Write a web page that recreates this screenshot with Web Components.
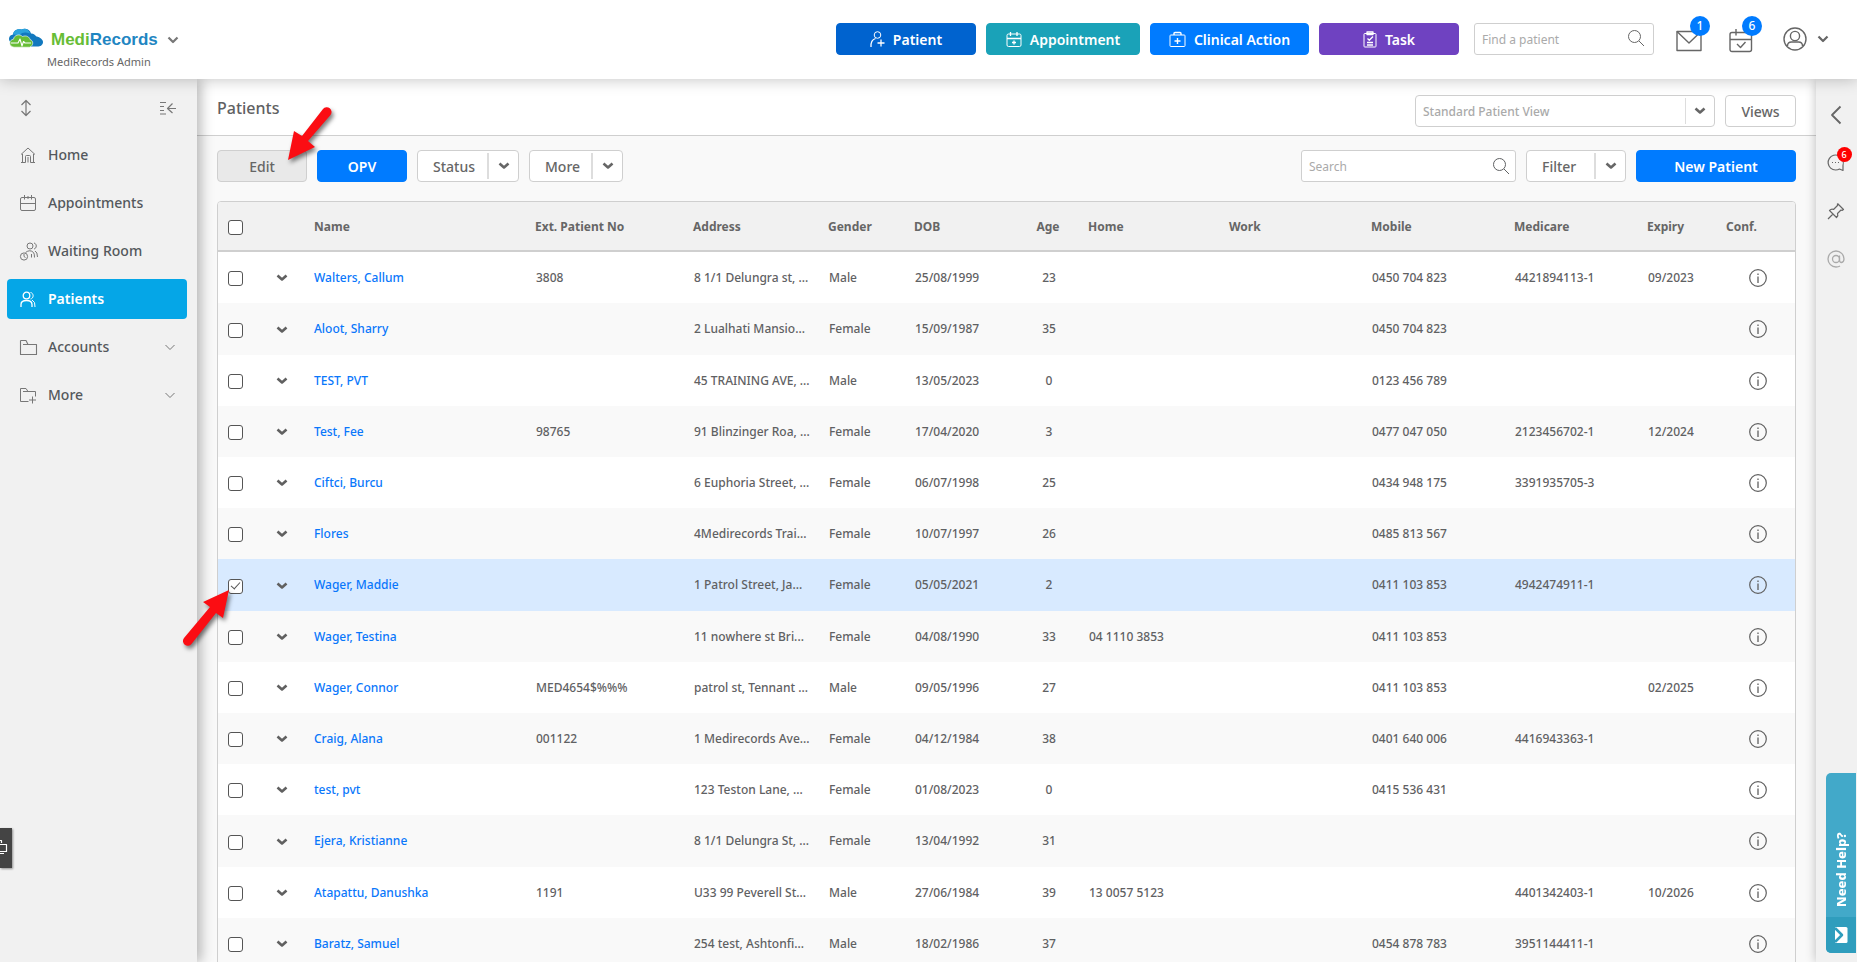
<!DOCTYPE html>
<html lang="en">
<head>
<meta charset="utf-8">
<title>MediRecords - Patients</title>
<style>
  html, body { margin: 0; height: 100%; }
  body {
    font-family: "Noto Sans", "Open Sans", sans-serif;
    font-size: 14px; color: #5f6163; background: #f9f9f9;
    --line: #cfcfcf; --ink: #666; --blue: #007bff; --panel: #f1f1f1;
  }
</style>
</head>
<body>
<mr-app></mr-app>
<script>
const ICONS = {
  chev: [12, 8, '<path d="M1.500 1.500 6 5.500l4.500-4" stroke-width="2.600"/>'],
  chevthin: [10, 7, '<path d="M.5 1 5 5.500 9.500 1"/>'],
  chevlogo: [12, 8, '<path d="M1.500 1.500 6 6l4.500-4.500" stroke-width="2.200"/>'],
  updown: [12, 18, '<path d="M6 2v14M1.500 6 6 1.500 10.500 6M1.500 12 6 16.500l4.500-4.500" stroke-width="1.200"/>'],
  collapse: [18, 14, '<path d="M1 1.500h6M1 5.500h4M1 9.500h4M1 13h6M9 7.500h8M13.500 2.500 8.500 7.500l5 4.500" stroke-width="1.200"/>'],
  home: [16, 16, '<path d="M1 7.500 8 1l7 6.500M2.500 7v8.500M13.500 7v8.500M1 15.500h4.500V9.500q0-1 1-1h3q1 0 1 1v6H15M8 10v5.500"/>'],
  cal: [16, 16, '<rect x=".5" y="2.500" width="15" height="13" rx="1.500"/><path d="M.5 8.500h15M4.500 0v4.500M11.500 0v4.500M8 1v3"/>'],
  wait: [18, 19, '<circle cx="10" cy="4" r="3"/><path d="M14 1c3 .5 3 5.500 0 6M5.500 10.500q4.500-3.500 8 0 1 1 1 5M15 9q2.500 1 2.500 6M11.500 12v3.500"/><circle cx="4" cy="14.500" r="3.600"/><path d="M4 12v2.500l1.500 1"/>'],
  people: [16, 17, '<circle cx="6.500" cy="4.500" r="3.300" stroke-width="1.300"/><path d="M1 16v-2.500Q1 9.500 6.500 9.500t5.500 4V16" stroke-width="1.300"/><path d="M10.500 1.500c3.500.5 3.500 6 0 6.500M12 9q3.500 1.500 3 7"/>'],
  folder: [17, 16, '<path d="M.5 1.500V15.500h16V5.500H3M.5 1.500H6L8 5.500" stroke-width="1.100"/>'],
  folderplus: [17, 17, '<path d="M8.500 14.500H.5v-13H6l2 3h7.500v5M3 4.500h5M12.500 9.500v7M9 13h7"/>'],
  useradd: [15, 17, '<circle cx="7.500" cy="4" r="3.300"/><path d="M1 16q-.5-7 4.500-8.500M7.500 12h7M11 8.500v7" stroke-width="1.300"/>'],
  calplus: [16, 17, '<rect x="1" y="3" width="14" height="12.500" rx="1.500"/><path d="M1 7.500h14M4.500 1v4M11 1v4M8 9.500v4M6 11.500h4" stroke-width="1.300"/>'],
  kit: [17, 17, '<rect x="1" y="4" width="15" height="11.500" rx=".8"/><path d="M5 4V2.500Q5 1.500 6 1.500h5q1 0 1 1V4M8.500 7v6M5.500 10h6" stroke-width="1.400"/>'],
  task: [14, 17, '<rect x="1" y="2.500" width="12" height="13.500" rx=".8"/><path d="M4 1h6v2.500H4zM4 11.500h6M4 14h6M4.500 7.500l1.800 1.800L10 5.500" stroke-width="1.300"/>'],
  search: [18, 18, '<circle cx="7.500" cy="7.500" r="6"/><path d="m12 12 5 5"/>'],
  mail: [26, 22, '<path d="M1 1.500h24v19H1z" stroke-width="1.400"/><path d="M1 1.500 13 13 25 1.500" stroke-width="1.400"/>'],
  calcheck: [24, 24, '<rect x="1" y="3.500" width="21.500" height="19" rx="2" stroke-width="1.400"/><path d="M1 10.500h21.500M7 0v6.500M8 15l3.500 3.500 5-5.500" stroke-width="1.400"/>'],
  user: [24, 24, '<circle cx="12" cy="12" r="11" stroke-width="1.400"/><circle cx="12" cy="9" r="4.600" stroke-width="1.400"/><path d="M4.500 19q0-4 4-4h7q4 0 4 4" stroke-width="1.400"/>'],
  back: [12, 20, '<path d="M10.500 1.500 2 10l8.500 8.500" stroke-width="1.800"/>'],
  chat: [18, 18, '<path d="M16 16.500v-5q1-3-.5-6A7.500 7.500 0 1 0 8.500 16q2.500 0 4-1zM5 8.500h1M8 8.500h1M11 8.500h1" stroke-width="1.200"/>'],
  pin: [18, 18, '<path d="m10.500 1.500 6 6-1.500 1-1-.5-3.500 3.500q1 2-1 4L2.500 8.500q2-2 4-1L10.500 3.500V1.500M6 12l-5 5" stroke-width="1.200"/>'],
  at: [18, 18, '<circle cx="9" cy="9" r="3.500" stroke-width="1.300"/><path d="M12.500 5.500V10q0 2.500 2 2.500 2.500-.5 2.500-3.500A8 8 0 1 0 9 17q2.500 0 4-1" stroke-width="1.300"/>'],
  info: [18, 18, '<circle cx="9" cy="9" r="8.300" stroke-width="1.200"/><path d="M9 7.500V14M9 4.500V6" stroke-width="1.300"/>'],
  mailsolid: [14, 16, '<path d="M1 0h11q1.500 0 1.500 1.500v13Q13.500 16 12 16H1z" fill="#fff" stroke="none"/><path d="m1 1 7 7-7 7" stroke="#2f9dbd" stroke-width="2.500"/>'],
  screen: [8, 16, '<path d="M-4 4.500H6.500v7H-4M-1 4V.5h2.500V3M0 13.500h4" stroke-width="1.200"/>'],
  cloud: [36, 20, '<path d="M3 14.500C-.5 12 1 7 5 6.500 5.500 2 10 .5 13.500 1.500 17-.5 22 1 23 5.500c3 0 4 1.500 5.500 3C32 9 35.500 12 35 14.500S33 18.500 29 18.500H18L8 14z" fill="#1278be" stroke="none"/><path d="M5 6.500C5.500 2 10 .5 13.500 1.500 17-.5 21 1.500 22 5.500 18 4 14 4 12 7z" fill="#2ba3dc" stroke="none"/><path d="M6 19.200c-6-1-5-7.500-.5-8C6 7 11.500 5.500 14.500 8.500c4-1.500 7 .5 7.500 3 3.500 1 4 6-.5 7.700z" fill="#67bd36" stroke="#fff" stroke-width=".6"/><path d="M3 15h7l2-4 2 7 1.500-4.500L17 15h6" stroke="#fff" stroke-width="1.100"/>']
};

/* Registers an element whose shadow root is filled from css + html. */
function define(name, css, html) {
  const base = '*{box-sizing:border-box}button,input,select{font-family:inherit;font-size:14px;line-height:20px;color:inherit;margin:0}button{border:0;background:none;padding:0;cursor:pointer}';
  customElements.define(name, class extends HTMLElement {
    constructor() {
      super();
      this.attachShadow({ mode: 'open' });
    }
    connectedCallback() {
      if (this.shadowRoot.firstChild) return;
      const markup = typeof html === 'function' ? html(this) : html;
      this.shadowRoot.innerHTML = `<style>${base}${css}</style>${markup}`;
    }
  });
}

define('mr-icon', ':host{display:inline-flex;flex:none}svg{display:block;overflow:visible;fill:none;stroke:currentColor;stroke-width:1;stroke-linejoin:round}', el => {
  const [w, h, body] = ICONS[el.getAttribute('name')];
  return `<svg width="${w}" height="${h}" viewBox="0 0 ${w} ${h}" aria-hidden="true">${body}</svg>`;
});

/* Solid or outlined push button */
define('mr-button', `
  :host{display:block}
  button{display:flex;align-items:center;justify-content:center;gap:8px;width:100%;height:32px;border-radius:4px;padding:1px 15px 0;background:var(--bg,#fff);border:1px solid var(--edge,var(--bg,var(--line)));color:var(--fg,var(--ink));font-weight:var(--weight,500);white-space:nowrap}
`, '<button type="button"><slot></slot></button>');

/* Label plus drop-down arrow */
define('mr-split', `
  :host{display:block}
  div{display:flex;height:32px;border:1px solid var(--line);border-radius:4px;background:#fff}
  button{color:var(--ink);font-weight:500}
  .l{flex:1;padding:1px 0 0 15px;text-align:left}
  .d{width:31px;display:flex;align-items:center;justify-content:center;border-left:2px solid #ddd;margin:2px 0}
`, () => `<div><button type="button" class="l"><slot></slot></button><button type="button" class="d" aria-label="Open menu"><mr-icon name="chev"></mr-icon></button></div>`);

define('mr-search', `
  :host{display:block}
  label{display:flex;align-items:center;height:32px;border:1px solid var(--line);border-radius:3px;background:#fff;padding:0 5px 0 7px}
  input{flex:1;min-width:0;border:0;outline:0;background:none;font-size:12px;padding:2px 0 0}
  input::placeholder{color:#aaa;opacity:1}
  :host([raised]) mr-icon{margin:0 3px 2px 0}
`, el => `<label><input type="text" aria-label="${el.getAttribute('hint')}" placeholder="${el.getAttribute('hint')}"><mr-icon name="search"></mr-icon></label>`);

define('mr-counter', `
  :host{display:block;position:relative}
  button{display:flex}
  span{position:absolute;left:var(--bx);top:var(--by);width:var(--size,20px);height:var(--size,20px);border-radius:50%;background:var(--badge,var(--blue));color:#fff;font-size:var(--fs,12px);line-height:var(--size,20px);font-weight:500;text-align:center}
`, el => `<button type="button" aria-label="${el.getAttribute('label')}"><mr-icon name="${el.getAttribute('icon')}"></mr-icon></button><span>${el.getAttribute('count')}</span>`);

define('mr-header', `
  :host{display:flex;align-items:flex-start;height:79px;background:#fff;box-shadow:0 0 15px rgba(0,0,0,.25);position:relative;z-index:3;color:var(--ink)}
  .brand{width:197px;padding:28px 0 0 8px}
  .logo{display:flex;align-items:center;font-family:"Liberation Sans",Arial,sans-serif;font-weight:700;font-size:17px;line-height:24px;color:#67bd36}
  .logo b{color:#1f86c2}
  .logo mr-icon[name=cloud]{margin:0 7px 4px 0}
  .logo button{margin-left:9px;display:flex;color:#777}
  .acct{font-size:11px;line-height:16px;padding-left:39px;margin-top:2px}
  .tools{margin-left:auto;display:flex;align-items:center;gap:10px;height:32px;margin-top:23px;padding-right:28px}
  mr-button{--fg:#fff;--weight:600}
  mr-search{width:180px;margin:0 12px 0 5px}
  .ico{display:flex}
  mr-counter{padding-top:3px}
  mr-counter + mr-counter{margin:0 20px 0 17px}
`, `
  <div class="brand">
    <div class="logo"><mr-icon name="cloud"></mr-icon><span>Medi<b>Records</b></span><button type="button" aria-label="Switch practice"><mr-icon name="chevlogo"></mr-icon></button></div>
    <div class="acct">MediRecords Admin</div>
  </div>
  <div class="tools">
    <mr-button style="width:140px;--bg:#0063cf"><mr-icon name="useradd"></mr-icon>Patient</mr-button>
    <mr-button style="width:154px;--bg:#1aa2b8"><mr-icon name="calplus"></mr-icon>Appointment</mr-button>
    <mr-button style="width:159px;--bg:#007bff"><mr-icon name="kit"></mr-icon>Clinical Action</mr-button>
    <mr-button style="width:140px;--bg:#6f42c1"><mr-icon name="task"></mr-icon>Task</mr-button>
    <mr-search hint="Find a patient" raised></mr-search>
    <mr-counter icon="mail" label="Messages" count="1" style="--bx:14px;--by:-11px"></mr-counter>
    <mr-counter icon="calcheck" label="Tasks due" count="6" style="--bx:13px;--by:-10px"></mr-counter>
    <button type="button" class="ico" aria-label="Profile"><mr-icon name="user"></mr-icon></button>
    <button type="button" class="ico" aria-label="Profile menu"><mr-icon name="chevlogo"></mr-icon></button>
  </div>`);

define('mr-nav-item', `
  :host{display:block}
  a{display:flex;align-items:center;height:40px;border-radius:4px;padding:0 12px 0 13px;color:#54585c;text-decoration:none;font-weight:500;line-height:20px}
  .i{width:28px;display:flex;align-items:center}
  mr-icon{color:var(--nicon,#777)}
  .t{flex:1}
  :host([current]) a{background:#05a6e7;color:#fff;font-weight:600;--nicon:#fff}
`, el => `<a href="#"${el.hasAttribute('current') ? ' aria-current="page"' : ''}><span class="i"><mr-icon name="${el.getAttribute('icon')}"></mr-icon></span><span class="t"><slot></slot></span>${el.hasAttribute('more') ? '<mr-icon name="chevthin"></mr-icon>' : ''}</a>`);

define('mr-sidebar', `
  :host{display:block;width:197px;flex:none;background:var(--panel);box-shadow:4px 0 12px rgba(0,0,0,.28);position:relative;z-index:2;padding:20px 10px 0 7px}
  .top{display:flex;justify-content:space-between;align-items:center;height:18px;padding:0 10px 0 13px;color:#777;margin:0 0 18px}
  .top button{display:flex}
  nav{display:grid;gap:8px}
  .tab{position:absolute;left:0;top:749px;width:12px;height:40px;background:#444;color:#fff;display:flex;align-items:center;box-shadow:1px 1px 2px rgba(0,0,0,.4);overflow:hidden}
`, `
  <div class="top"><button type="button" aria-label="Reorder"><mr-icon name="updown"></mr-icon></button><button type="button" aria-label="Collapse menu"><mr-icon name="collapse"></mr-icon></button></div>
  <nav>
    <mr-nav-item icon="home">Home</mr-nav-item>
    <mr-nav-item icon="cal">Appointments</mr-nav-item>
    <mr-nav-item icon="wait">Waiting Room</mr-nav-item>
    <mr-nav-item icon="people" current>Patients</mr-nav-item>
    <mr-nav-item icon="folder" more>Accounts</mr-nav-item>
    <mr-nav-item icon="folderplus" more>More</mr-nav-item>
  </nav>
  <button type="button" class="tab" aria-label="Screen share"><mr-icon name="screen"></mr-icon></button>`);

define('mr-view-select', `
  :host{display:block;position:relative}
  select{appearance:none;width:100%;height:32px;border:1px solid var(--line);border-radius:4px;background:#fff;padding:1px 36px 0 7px;font-size:12px;font-weight:500;color:#aaa}
  span{position:absolute;right:1px;top:3px;bottom:3px;width:29px;border-left:1px solid #ddd;display:flex;align-items:center;justify-content:center;color:var(--ink);pointer-events:none}
`, `<select aria-label="Patient view"><option>Standard Patient View</option></select><span><mr-icon name="chev"></mr-icon></span>`);

const PATIENTS = [
  ['Walters, Callum','3808','8 1/1 Delungra st, ...','Male','25/08/1999','23','','','0450 704 823','4421894113-1','09/2023'],
  ['Aloot, Sharry','','2 Lualhati Mansio...','Female','15/09/1987','35','','','0450 704 823','',''],
  ['TEST, PVT','','45 TRAINING AVE, ...','Male','13/05/2023','0','','','0123 456 789','',''],
  ['Test, Fee','98765','91 Blinzinger Roa, ...','Female','17/04/2020','3','','','0477 047 050','2123456702-1','12/2024'],
  ['Ciftci, Burcu','','6 Euphoria Street, ...','Female','06/07/1998','25','','','0434 948 175','3391935705-3',''],
  ['Flores','','4Medirecords Trai...','Female','10/07/1997','26','','','0485 813 567','',''],
  ['Wager, Maddie','','1 Patrol Street, Ja...','Female','05/05/2021','2','','','0411 103 853','4942474911-1',''],
  ['Wager, Testina','','11 nowhere st Bri...','Female','04/08/1990','33','04 1110 3853','','0411 103 853','',''],
  ['Wager, Connor','MED4654$%%%','patrol st, Tennant ...','Male','09/05/1996','27','','','0411 103 853','','02/2025'],
  ['Craig, Alana','001122','1 Medirecords Ave...','Female','04/12/1984','38','','','0401 640 006','4416943363-1',''],
  ['test, pvt','','123 Teston Lane, ...','Female','01/08/2023','0','','','0415 536 431','',''],
  ['Ejera, Kristianne','','8 1/1 Delungra St, ...','Female','13/04/1992','31','','','','',''],
  ['Atapattu, Danushka','1191','U33 99 Peverell St...','Male','27/06/1984','39','13 0057 5123','','','4401342403-1','10/2026'],
  ['Baratz, Samuel','','254 test, Ashtonfi...','Male','18/02/1986','37','','','0454 878 783','3951144411-1','']
];
const HEADS = ['Name','Ext. Patient No','Address','Gender','DOB','Age','Home','Work','Mobile','Medicare','Expiry'];
const WIDTHS = [38,50,221,158,135,86,110,64,141,142,143,133,79,78];
const SELECTED = 6;

define('mr-patient-table', `
  :host{display:block;border:1px solid var(--line);border-radius:4px 4px 0 0;overflow:hidden;background:#fff}
  table{width:100%;table-layout:fixed;border-collapse:separate;border-spacing:0;font-size:12px;line-height:18px;font-weight:500}
  th,td{text-align:left;white-space:nowrap;overflow:hidden}
  th{height:50px;padding:1px 8px 0;background:var(--panel);border-bottom:2px solid var(--line);font-weight:700;color:var(--ink)}
  td{height:51px;padding:0 7px 0 9px}
  td:nth-child(3){padding-left:8px}
  tr:nth-child(5n+2) td{height:52px}
  tbody tr:nth-child(even){background:#f9f9f9}
  tbody tr.on{background:#d8eaff}
  th:first-child,td:first-child{padding:2px 0 0 10px}
  td:nth-child(2),td:last-child,.age{text-align:center}
  a{color:#0a77fb;text-decoration:none}
  button{display:inline-flex;vertical-align:middle;color:#606060}
  input{appearance:none;display:block;position:relative;width:15px;height:15px;border:1px solid #555;border-radius:3px;background:#fff}
  input:checked::after{content:"";position:absolute;left:4px;top:0;width:4px;height:8px;border:solid #555;border-width:0 1px 1px 0;transform:rotate(42deg)}
`, () => `<table><colgroup>${WIDTHS.map(w => `<col style="width:${w}px">`).join('')}</colgroup>
  <thead><tr><th><input type="checkbox" aria-label="Select all patients"></th><th></th>${HEADS.map(h => `<th${h === 'Age' ? ' class="age"' : ''}>${h}</th>`).join('')}<th>Conf.</th></tr></thead>
  <tbody>${PATIENTS.map((p, i) => `<tr${i === SELECTED ? ' class="on"' : ''}><td><input type="checkbox" aria-label="Select ${p[0]}"${i === SELECTED ? ' checked' : ''}></td><td><button type="button" aria-label="Expand"><mr-icon name="chev"></mr-icon></button></td>${p.map((c, k) => k === 0 ? `<td><a href="#">${c}</a></td>` : `<td${k === 5 ? ' class="age"' : ''}>${c}</td>`).join('')}<td><button type="button" aria-label="Details"><mr-icon name="info"></mr-icon></button></td></tr>`).join('')}</tbody></table>`);

define('mr-patients-page', `
  :host{display:block;flex:1;min-width:0;overflow:hidden}
  header{display:flex;align-items:center;gap:10px;height:57px;padding:14px 20px 0;background:#fff;border-bottom:1px solid var(--line);padding-top:13px;padding-bottom:5px}
  h1{flex:1;margin:0;font-size:16px;line-height:24px;font-weight:500;color:#5f6163;padding-bottom:6px}
  .bar{display:flex;gap:10px;padding:14px 20px 19px}
  .gap{flex:1}
  mr-patient-table{margin:0 20px}
`, `
  <header><h1>Patients</h1><mr-view-select style="width:300px"></mr-view-select><mr-button style="width:71px">Views</mr-button></header>
  <div class="bar">
    <mr-button style="width:90px;--bg:#e9e9e9;--edge:#cfcfcf">Edit</mr-button>
    <mr-button style="width:90px;--bg:#007bff;--fg:#fff;--weight:600">OPV</mr-button>
    <mr-split style="width:102px">Status</mr-split>
    <mr-split style="width:94px">More</mr-split>
    <span class="gap"></span>
    <mr-search hint="Search" style="width:215px"></mr-search>
    <mr-split style="width:100px">Filter</mr-split>
    <mr-button style="width:160px;--bg:#007bff;--fg:#fff;--weight:600">New Patient</mr-button>
  </div>
  <mr-patient-table></mr-patient-table>`);

define('mr-rail', `
  :host{display:block;width:41px;flex:none;background:var(--panel);box-shadow:0 0 10px rgba(0,0,0,.25);position:relative;z-index:2;color:var(--ink)}
  .icons{display:grid;justify-items:center;grid-auto-rows:48px;align-items:center;padding:12px 2px 0 0}
  .icons button{display:flex}
  .icons .at{color:#aaa}
  .help{position:absolute;right:1px;top:694px;width:30px;height:180px;border-radius:5px 0 0 5px;background:#42a9c9;color:#fff;overflow:hidden;display:flex;flex-direction:column}
  .help span{flex:1;writing-mode:vertical-rl;transform:rotate(180deg);font-weight:800;font-size:13px;line-height:30px;padding-top:10px;text-align:left;width:30px}
  .help i{height:36px;width:30px;background:#2f9dbd;display:flex;align-items:center;justify-content:center}
`, `
  <div class="icons">
    <button type="button" aria-label="Expand panel"><mr-icon name="back"></mr-icon></button>
    <mr-counter icon="chat" label="Chat" count="6" style="--bx:10px;--by:-7px;--size:15px;--fs:9px;--badge:#f00"></mr-counter>
    <button type="button" aria-label="Pinned"><mr-icon name="pin"></mr-icon></button>
    <button type="button" class="at" aria-label="Mentions"><mr-icon name="at"></mr-icon></button>
  </div>
  <button type="button" class="help"><span>Need Help?</span><i><mr-icon name="mailsolid"></mr-icon></i></button>`);

/* Red pointer arrows lying over the page */
define('mr-pointers', `
  :host{position:absolute;left:0;top:0;z-index:5;pointer-events:none}
  svg{display:block;filter:drop-shadow(2px 3px 2px rgba(0,0,0,.5))}
`, `<svg width="350" height="660" viewBox="0 0 350 660" fill="#fb0d13" aria-hidden="true">
  <path d="M288 160 294 131 302 136 323 109a4.600 4.600 0 0 1 7.500 6L308 141 315 147z"/>
  <path d="M229 590 203 602 210 607 184 638a4.800 4.800 0 0 0 7.500 6L216 613 223 618z"/></svg>`);

define('mr-app', `
  :host{display:flex;flex-direction:column;height:100vh;overflow:hidden;position:relative}
  .body{display:flex;flex:1;min-height:0}
`, `<mr-header></mr-header><div class="body"><mr-sidebar></mr-sidebar><mr-patients-page></mr-patients-page><mr-rail></mr-rail></div><mr-pointers></mr-pointers>`);
</script>
</body>
</html>
